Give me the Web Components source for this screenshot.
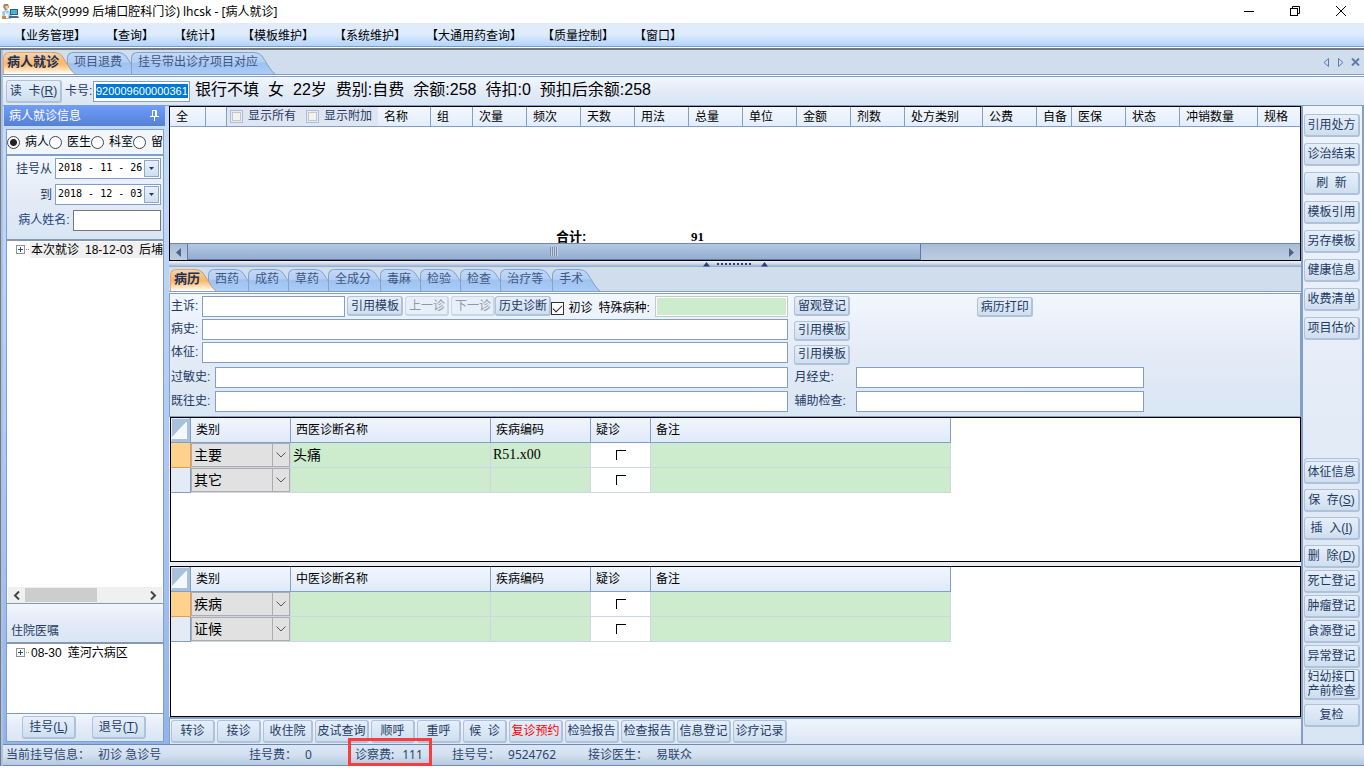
<!DOCTYPE html>
<html lang="zh-CN">
<head>
<meta charset="utf-8">
<title>易联众 - 病人就诊</title>
<style>
html,body{ height:100%; margin:0; }
body{
	--line:#839fc6;
	--ink:#1e3a63;
	--panel:linear-gradient(#f2f7fe,#e4ebf7 50%,#d9e6f4);
	--sans:"Liberation Sans","Noto Sans CJK SC",sans-serif;
	--ui:"Noto Sans","Noto Sans CJK SC",sans-serif;
	font:12px/16px var(--sans);
	color:#000;
	background:#fff;
	overflow:hidden;
}
</style>
</head>
<body>
<his-app></his-app>

<script>
//========================================================================
// outpatient desk
//	ui-*  ... small reusable parts (button, field, tab, tree node ...)
//	his-* ... the sections of the window
//========================================================================

const RESET = `
	*{ box-sizing:border-box; }
	:host{ display:block; box-sizing:border-box; }
	:host([hidden]){ display:none; }
	button,input,select{ font:inherit; color:inherit; margin:0; }
`;

//--base class : subclasses only supply css() and html()--
class Part extends HTMLElement{
	css(){ return "" }
	html(){ return "<slot></slot>" }
	attr(name,fallback=""){ return this.getAttribute(name) ?? fallback }
	connectedCallback(){
		if(this.shadowRoot) return;
		const tpl = document.createElement("template");
		tpl.innerHTML = `<style>${RESET}${this.css()}</style>${this.html()}`;
		this.attachShadow({mode:"open"}).appendChild(tpl.content.cloneNode(true));
	}
}

//--push button--
class UiButton extends Part{
	css(){ return `
		:host{ display:inline-flex; height:23px; min-width:44px; color:var(--ink); }
		button{
			flex:1; padding:0; white-space:pre; text-align:center;
			line-height:14px; cursor:default;
			border:2px solid #b0c1da; border-width:1px 2px 2px 1px; border-radius:3px;
			background:linear-gradient(#e6effa,#dbe7f5 50%,#cfdff0);
		}
		button:disabled{ color:#8f98a8; border-color:#c9d6e8; background:#e7eff9; }
		:host([alert]){ color:#f00; }
	` }
	html(){ return `<button type="button" ${this.hasAttribute("disabled")?"disabled":""}><slot></slot></button>` }
}
customElements.define("ui-button",UiButton);

//--label + text box--
class UiField extends Part{
	css(){ return `
		:host{ display:flex; align-items:center; height:21px; color:var(--ink); min-width:0; }
		label{ flex:0 0 var(--label,31px); padding-bottom:1px; white-space:nowrap; text-align:var(--label-align,left); }
		input{
			flex:1; min-width:0; height:100%; padding:0 2px; border-radius:0; outline:0;
			border:1px solid var(--field-line,var(--line)); background:#fff; color:#000;
		}
		:host([green]) label{ color:#000; padding:3px 0 0; }
		:host([green]) input{ border-color:#c8c8c8; background:#cdebcd; box-shadow:inset 0 0 0 1px #fff; }
		:host([picked]) input{ font:11px/15px "Liberation Sans",sans-serif; background:linear-gradient(#0078d7,#0078d7) center/calc(100% - 3px) 14px no-repeat #fff; color:#fff; }
	` }
	html(){ return `<label for="box">${this.attr("label")}</label><input id="box" type="text" value="${this.attr("value")}">` }
}
customElements.define("ui-field",UiField);

//--date box with a drop button--
class UiDate extends Part{
	css(){ return `
		:host{ display:flex; align-items:center; height:21px; color:var(--ink); }
		label{ flex:0 0 48px; padding-right:3px; text-align:right; white-space:nowrap; }
		.box{ flex:1; min-width:0; display:flex; height:100%; padding:1px; border:1px solid var(--line); background:#fff; }
		input{ flex:1; min-width:0; padding:0 0 2px 1px; border:0; outline:0; background:none; color:#000; font:10px/14px "DejaVu Sans Mono",monospace; }
		button{ flex:0 0 15px; padding:0; border:1px solid #8ea8cc; background:linear-gradient(#e8f0fa,#cfdff1); display:grid; place-items:center; }
	` }
	html(){ return `<label for="date">${this.attr("label")}</label>
		<div class="box"><input id="date" value="${this.attr("value")}">
		<button type="button" aria-label="▾"><svg width="5" height="3"><path d="M0 0H5L2.500 3Z" fill="#1e3a63"/></svg></button></div>` }
}
customElements.define("ui-date",UiDate);

//--check box with its caption--
class UiCheck extends Part{
	css(){ return `
		:host{ display:inline-flex; }
		label{ display:flex; align-items:center; gap:4px; white-space:nowrap; }
		input{ appearance:none; width:13px; height:13px; border:1px solid #333; background:#fff; display:grid; place-items:center; }
		input:checked::before{ content:""; width:8px; height:4px; border:solid #222; border-width:0 0 1px 1px; transform:translateY(-1px) rotate(-45deg); }
		:host([soft]) label{ gap:5px; color:var(--ink); }
		:host([soft]) input{ border-color:#a9bfe0; background:#f2f2f0; box-shadow:inset 0 0 0 1px #e4ebf7,inset 0 0 0 2px #c5c5c5; }
		:host([soft]) span{ padding-bottom:2px; }
	` }
	html(){ return `<label><input type="checkbox" ${this.hasAttribute("checked")?"checked":""}><span><slot></slot></span></label>` }
}
customElements.define("ui-check",UiCheck);

//--tab : rounded on the left, slanted on the right--
class UiTab extends Part{
	css(){ return `
		:host{ display:inline-block; height:22px; margin-right:-8px; position:relative; z-index:0; }
		:host([active]){ z-index:1; }
		button{ display:grid; height:22px; padding:0; border:0; background:none; color:#40577f; }
		.shape,.text{ grid-area:1/1; }
		.shape{ display:flex; min-width:0; }
		.shape i{
			flex:1; border:1px solid #86a2ca; border-width:1px 0 0 1px; border-radius:6px 0 0 0;
			background:linear-gradient(#c1d9fa,#b3cff5 45%,#9fc2f1 50%,#a9cbf6);
		}
		.text{ padding:1px 17px 0 7px; line-height:18px; white-space:nowrap; text-align:left; }
		:host([active]) button{ color:#1c3258; font-weight:bold; }
		:host([active]) .text{ padding:1px 16px 0 4px; font-size:13px; }
		:host([active]) .shape i{ border-color:#e0a878; background:linear-gradient(#f3d3ae,#fab970 45%,#ffb867 55%,#fff3e2 92%,#fff); }
		svg{ flex:0 0 23px; height:22px; }
	` }
	html(){
		const on = this.hasAttribute("active");
		const stops = on
			? [["0","#f3d3ae"],[".45","#fab970"],[".55","#ffb867"],[".92","#fff3e2"],["1","#fff"]]
			: [["0","#c1d9fa"],[".45","#b3cff5"],[".5","#9fc2f1"],["1","#a9cbf6"]];
		return `<button type="button" role="tab" aria-selected="${on}">
			<span class="shape"><i></i><svg viewBox="0 0 23 22"><defs><linearGradient id="g" x2="0" y2="1">
			${stops.map(s=>`<stop offset="${s[0]}" stop-color="${s[1]}"/>`).join("")}</linearGradient></defs>
			<path d="M0 0H2Q7 0 10 4L17 15Q20 20 23 22H0Z" fill="url(#g)"/>
			<path d="M0 .5H2Q7 .5 10 4L17 15Q20 20 23 22" fill="none" stroke="${on?"#c79b7c":"#86a2ca"}"/></svg></span>
			<span class="text"><slot></slot></span></button>`;
	}
}
customElements.define("ui-tab",UiTab);

//--strip that holds the tabs, double line under it--
class UiTabs extends Part{
	css(){ return `
		:host{ flex:none; display:flex; justify-content:space-between; height:27px; background:#d0dded;
			border-bottom:1px solid var(--line); box-shadow:inset 0 -1px #fff,inset 0 -2px var(--line); padding-bottom:2px; }
		.tabs{ display:flex; align-items:flex-end; }
	` }
	html(){ return `<div class="tabs" role="tablist"><slot></slot></div><slot name="tools"></slot>` }
}
customElements.define("ui-tabs",UiTabs);

//--one node of a tree--
class UiNode extends Part{
	css(){ return `
		:host{ display:flex; align-items:center; height:17px; padding-left:9px; white-space:nowrap; }
		svg{ flex:none; }
		.text{ display:flex; gap:6px; padding:0 1px; }
		:host([current]) .text{ background:#f0f0f0; }
	` }
	html(){ return `<svg width="14" height="11"><rect x=".5" y="1.500" width="8" height="8" fill="#fff" stroke="#919191"/>
		<path d="M2 5.500H7M4.500 3V8" stroke="#2b4f92"/><path d="M10 5.500h1M12 5.500h1" stroke="#888"/></svg>
		<span class="text"><slot></slot></span>` }
}
customElements.define("ui-node",UiNode);

//--title bar--
class HisTitle extends Part{
	css(){ return `
		:host{ flex:none; display:flex; align-items:center; height:23px; padding-left:2px; background:#fff; font-family:var(--ui); }
		h1{ flex:1; margin:0 0 0 3px; font-size:12px; font-weight:normal; line-height:22px; }
		button{ width:46px; height:22px; padding:0 0 2px; border:0; background:none; display:grid; place-items:center; }
		button path,button rect{ fill:none; stroke:#000; }
	` }
	html(){ return `
		<svg width="17" height="17" viewBox="0 0 17 17">
			<path d="M2 1h4l1 3-2 3H3L1 4Z" fill="#a9825f"/><path d="M3 3h3v3H4Z" fill="#f0cda8"/>
			<path d="M0 9 3 7l4 1 3 4-1 4H1Z" fill="#9cc5e8"/><path d="M3 8 5 11 7 9 6 15H3Z" fill="#e9f4fd"/>
			<rect x="8" y="6" width="8" height="6" fill="#2b5f86"/><rect x="9" y="7" width="6" height="4" fill="#48b3d4"/>
			<path d="M7 13h9l1 2H7Z" fill="#59677a"/><path d="M0 13h4v3H0Z" fill="#d6873f"/>
		</svg>
		<h1>易联众(9999 后埔口腔科门诊) lhcsk - [病人就诊]</h1>
		<button aria-label="最小化"><svg width="10" height="10"><path d="M0 5.500H10"/></svg></button>
		<button aria-label="还原"><svg width="10" height="10"><rect x=".5" y="2.500" width="7" height="7"/><path d="M2.500 2V.5H9.500V7.500H8"/></svg></button>
		<button aria-label="关闭"><svg width="10" height="10"><path d="M0 0 10 10M10 0 0 10"/></svg></button>` }
}
customElements.define("his-title",HisTitle);

//--menu bar--
class HisMenu extends Part{
	css(){ return `
		:host{ flex:none; height:24px; border-bottom:1px solid #6f9fd8; background:linear-gradient(#e3ebf8,#dcecfe 50%,#b3d3fb); font-family:var(--ui); }
		nav{ display:flex; gap:20px; padding:1px 0 0 14px; }
		button{ padding:0; border:0; background:none; line-height:24px; }
	` }
	html(){
		const items = ["业务管理","查询","统计","模板维护","系统维护","大通用药查询","质量控制","窗口"];
		return `<nav>${items.map(t=>`<button type="button">【${t}】</button>`).join("")}</nav>`;
	}
}
customElements.define("his-menu",HisMenu);

//--card reader line--
class HisPatient extends Part{
	css(){ return `
		:host{ flex:none; display:flex; align-items:center; height:29px; padding-left:3px; border-bottom:1px solid var(--line); background:var(--panel); }
		ui-button{ width:56px; margin-right:3px; }
		ui-field{ --label:28px; width:125px; margin-right:5px; }
		p{ display:flex; gap:9px; margin:0; font-size:16px; line-height:22px; white-space:nowrap; padding-bottom:2px; }
	` }
	html(){ return `<ui-button>读  卡(<u>R</u>)</ui-button><ui-field picked label="卡号:" value="920009600000361"></ui-field>
		<p><span>银行不填</span><span>女</span><span>22岁</span><span>费别:自费</span><span>余额:258</span><span>待扣:0</span><span>预扣后余额:258</span></p>` }
}
customElements.define("his-patient",HisPatient);

//--left panel--
class HisSide extends Part{
	css(){ return `
		:host{ flex:0 0 162px; min-width:0; display:flex; flex-direction:column; padding:0 1px 2px 0; }
		h2{ flex:none; display:flex; justify-content:space-between; align-items:center; height:20px; margin:0; padding:0 6px 1px 5px; font-size:12px; font-weight:normal;
			color:#fff; background:linear-gradient(#6f9cfb,#5480d4); }
		.body{ flex:1; min-height:0; display:flex; flex-direction:column; margin:3px 1px 0 2px; border:1px solid var(--line); background:var(--panel); overflow:hidden; }
		.radios{ flex:none; display:flex; align-items:center; height:26px; border-bottom:2px solid var(--line); overflow:hidden; }
		.radios label{ display:flex; align-items:center; white-space:nowrap; }
		.radios input{ appearance:none; flex:none; width:13px; height:13px; margin-right:5px; border:1px solid #444; border-radius:50%; background:#fff; }
		.radios input:checked{ background:radial-gradient(#222 3px,#fff 4px); }
		.filter{ flex:none; display:flex; flex-direction:column; gap:5px; height:83px; padding:2px 2px 0 0; background:var(--panel); }
		.filter ui-field{ --label:66px; --label-align:right; --field-line:#777; color:#1b4080; }
		.tree{ min-height:0; border:solid #8797b0; border-width:2px 0 1px; background:#fff; overflow:hidden; }
		.visits{ flex:1; display:flex; flex-direction:column; justify-content:space-between; }
		.bar{ display:flex; align-items:center; height:16px; margin:0 1px; background:#f0f0f0; }
		.bar svg{ flex:0 0 17px; }
		.bar .rail{ flex:1; height:14px; }
		.bar .thumb{ width:60%; height:14px; background:#cdcdcd; }
		h3{ flex:none; display:flex; align-items:flex-end; height:38px; margin:0; padding:0 0 3px 4px; font-size:12px; font-weight:normal; color:var(--ink); background:var(--panel); }
		.orders{ flex:0 0 72px; }
		.foot{ flex:none; display:flex; justify-content:space-between; height:27px; padding:2px 17px 0 15px; background:var(--panel); }
		.foot ui-button{ width:54px; }
	` }
	html(){
		const radios = ["病人","医生","科室","留"].map((t,i)=>`<label><input type="radio" name="by" ${i?"":"checked"}>${t}</label>`).join("");
		return `
		<h2>病人就诊信息<svg width="9" height="11"><path d="M2.500 6V.5H6.500V6M5.500 1V6M0 6.500H9M4.500 7V11" fill="none" stroke="#fff"/></svg></h2>
		<div class="body">
			<div class="radios">${radios}</div>
			<div class="filter">
				<ui-date label="挂号从" value="2018 - 11 - 26"></ui-date>
				<ui-date label="到" value="2018 - 12 - 03"></ui-date>
				<ui-field label="病人姓名:&nbsp;"></ui-field>
			</div>
			<div class="tree visits">
				<ui-node current><span>本次就诊</span><span>18-12-03</span><span>后埔</span></ui-node>
				<div class="bar">
					<svg height="9" viewBox="0 0 17 9"><path d="M11 .5 7 4.500 11 8.500" fill="none" stroke="#444" stroke-width="2"/></svg>
					<div class="rail"><div class="thumb"></div></div>
					<svg height="9" viewBox="0 0 17 9"><path d="M6 .5 10 4.500 6 8.500" fill="none" stroke="#444" stroke-width="2"/></svg>
				</div>
			</div>
			<h3>住院医嘱</h3>
			<div class="tree orders"><ui-node><span>08-30</span><span>莲河六病区</span></ui-node></div>
			<div class="foot"><ui-button>挂号(<u>L</u>)</ui-button><ui-button>退号(<u>T</u>)</ui-button></div>
		</div>`;
	}
}
customElements.define("his-side",HisSide);

//--prescription grid at the top--
class HisOrders extends Part{
	css(){ return `
		:host{ flex:0 0 155px; display:flex; flex-direction:column; border:1px solid #000; background:#fff; overflow:hidden; }
		.view{ flex:1; min-height:0; overflow:hidden; }
		table{ width:100%; table-layout:fixed; border-collapse:separate; border-spacing:0; }
		th{ height:20px; padding:1px 0 0 6px; text-align:left; font-weight:normal; white-space:nowrap;
			border:solid var(--line); border-width:0 1px 1px 0; background:linear-gradient(#f3f8ff,#e3edfb); }
		th.opts{ border-right:0; padding:0; background:#e0e6f1; }
		th:last-child{ border-right:0; }
		.opts div{ display:flex; gap:10px; padding-left:3px; height:18px; }
		tbody td{ height:102px; padding:0; }
		tfoot td{ padding:0; font-size:13px; font-weight:bold; line-height:16px; white-space:nowrap; }
		tfoot .sum{ padding-left:29px; }
		tfoot .num{ padding-left:2px; font-family:"Liberation Serif",serif; }
		.scroll{ flex:none; display:flex; align-items:center; height:17px; border-top:1px solid #6d87ad; background:linear-gradient(#a9bdd6,#bccde1); }
		.scroll svg{ flex:0 0 17px; }
		.rail{ flex:1; height:16px; }
		.thumb{ width:67%; height:16px; display:grid; place-items:center; border:solid #5f7ba3; border-width:0 1px 1px; background:linear-gradient(#b3c9e5,#93aed0); }
		.grip{ width:8px; height:9px; background:repeating-linear-gradient(90deg,#7f8fa6 0 1px,#c4d3e7 1px 2px); }
	` }
	html(){
		//last column takes the rest
		const cols = [["全",36],["",21],["*",151],["名称",53],["组",42],["次量",54],["频次",54],["天数",54],["用法",54],["总量",54],["单位",54],
			["金额",54],["剂数",54],["处方类别",78],["公费",54],["自备",35],["医保",54],["状态",54],["冲销数量",78],["规格",0]];
		const opts = `<th class="opts"><div><ui-check soft>显示所有</ui-check><ui-check soft>显示附加</ui-check></div></th>`;
		return `<div class="view"><table>
			<colgroup>${cols.map(c=>`<col${c[1]?` style="width:${c[1]}px"`:""}>`).join("")}</colgroup>
			<thead><tr>${cols.map(c=>c[0]==="*"?opts:`<th>${c[0]}</th>`).join("")}</tr></thead>
			<tbody><tr><td colspan="20"></td></tr></tbody>
			<tfoot><tr><td colspan="6"></td><td class="sum" colspan="3">合计:</td><td class="num">91</td><td colspan="10"></td></tr></tfoot>
		</table></div>
		<div class="scroll">
			<svg height="11" viewBox="0 0 17 11"><path d="M11 1V10L6 5.500Z" fill="#4a628c"/></svg>
			<div class="rail"><div class="thumb"><div class="grip"></div></div></div>
			<svg height="11" viewBox="0 0 17 11"><path d="M6 1V10L11 5.500Z" fill="#4a628c"/></svg>
		</div>`;
	}
}
customElements.define("his-orders",HisOrders);

//--splitter between the grid and the record--
class HisSplit extends Part{
	css(){ return `
		:host{ flex:0 0 6px; display:flex; justify-content:center; align-items:center; background:linear-gradient(#f2f5fb,#c9d6e8 50%,#8ea8cb); }
		svg{ display:block; }
	` }
	html(){ return `<svg width="66" height="5"><path d="M1 4.500 4.500 0 8 4.500ZM59 4.500 62.500 0 66 4.500Z" fill="#26407a"/><path d="M15 2H51" stroke="#26407a" stroke-width="2" stroke-dasharray="2 2"/></svg>` }
}
customElements.define("his-split",HisSplit);

//--medical record form--
class HisRecord extends Part{
	css(){ return `
		:host{
			flex:none; height:123px; padding:2px 0 0 1px; display:grid; align-items:start;
			grid-template-columns:618fr 6px 62px 288fr 156fr; grid-template-rows:23px 23px 25px 24px 21px;
			border:solid var(--line); border-width:0 1px 1px 1px; background:var(--panel);
		}
		ui-button{ height:20px; width:56px; }
		.first{ display:flex; min-width:0; }
		.first ui-field:first-child{ flex:1; margin-right:2px; }
		.first ui-button.step{ width:42px; margin-left:2px; }
		.first ui-check{ height:22px; padding-top:2px; color:#000; }
		.first ui-field[green]{ --label:57px; width:190px; margin-left:6px; }
		.long{ grid-column:1; --label:44px; }
		.mid{ grid-column:3; align-self:center; }
		.top{ align-self:start; }
		.side{ grid-column:3/5; --label:62px; }
		.print{ grid-column:4; margin:1px 0 0 42%; }
		.long.short{ --label:31px; }
	` }
	html(){ return `
		<div class="first">
			<ui-field label="主诉:"></ui-field>
			<ui-button>引用模板</ui-button><ui-button class="step" disabled>上一诊</ui-button><ui-button class="step" disabled>下一诊</ui-button>
			<ui-button>历史诊断</ui-button><ui-check checked>初诊</ui-check>
			<ui-field green label="特殊病种:"></ui-field>
		</div>
		<ui-button class="mid top">留观登记</ui-button><ui-button class="print">病历打印</ui-button>
		<ui-field class="long short" label="病史:"></ui-field><ui-button class="mid">引用模板</ui-button>
		<ui-field class="long short" label="体征:"></ui-field><ui-button class="mid">引用模板</ui-button>
		<ui-field class="long" label="过敏史:"></ui-field><ui-field class="side" label="月经史:"></ui-field>
		<ui-field class="long" label="既往史:"></ui-field><ui-field class="side" label="辅助检查:"></ui-field>` }
}
customElements.define("his-record",HisRecord);

//--diagnosis grid; rows="type,name,code;type,name,code"--
class HisDiagnosis extends Part{
	css(){ return `
		:host{ min-height:0; border:1px solid #000; background:#fff; overflow:hidden; }
		table{ width:780px; table-layout:fixed; border-collapse:separate; border-spacing:0; }
		th,td{ height:25px; padding:0 0 0 5px; text-align:left; font-weight:normal; white-space:nowrap; }
		th{ border:solid var(--line); border-width:0 1px 1px 0; background:linear-gradient(#f1f6fe,#dfeaf8); }
		td{ padding-left:2px; border:solid #ced6e6; border-width:0 1px 1px 0; background:#cdebcd; }
		td.head{ background:#e3ebf7; border-color:var(--line); }
		td.on{ background:#ffd28c; border-color:#f09a3e; }
		td.pick{ padding:0; background:#fff; }
		td.name{ font-size:14px; }
		td.code{ font-family:"Liberation Serif",serif; font-size:14px; }
		td.mark{ background:#fff; padding:0; }
		.mark input{ display:block; appearance:none; width:10px; height:10px; margin:0 auto; border:solid #000; border-width:1px 0 0 1px; }
		th.corner{ padding:0; background:#a9c0dd; }
		.corner svg{ display:block; }
		.combo{ display:grid; height:24px; border:1px solid #adadad; background:#e1e1e1; }
		.combo>*{ grid-area:1/1; }
		select{ appearance:none; width:100%; padding:0 0 0 2px; border:0; border-radius:0; outline:0; background:none; font-size:14px; line-height:20px; }
		.combo span{ justify-self:end; width:17px; border:solid #adadad; border-width:0 0 0 1px; display:grid; place-items:center; pointer-events:none; }
	` }
	html(){
		const rows = this.attr("rows").split(";").map(r=>r.split(","));
		const body = rows.map((r,i)=>`<tr><td class="head${i?"":" on"}"></td>
			<td class="pick"><div class="combo"><select aria-label="类别"><option>${r[0]}</option></select>
				<span><svg width="10" height="6"><path d="M.5 .5 5 5 9.500 .5" fill="none" stroke="#555"/></svg></span></div></td>
			<td class="name">${r[1]||""}</td><td class="code">${r[2]||""}</td>
			<td class="mark"><input type="checkbox" aria-label="疑诊"></td><td></td></tr>`).join("");
		return `<table>
			<colgroup><col style="width:20px"><col style="width:100px"><col style="width:200px"><col style="width:100px"><col style="width:60px"><col></colgroup>
			<thead><tr><th class="corner"><svg width="19" height="24"><path d="M1 21V19L15 4H16V21Z" fill="#f4f8fd"/><path d="M.5 23V.5H18" fill="none" stroke="#e2ebf6"/></svg></th>
			<th>类别</th><th>${this.attr("caption")}</th><th>疾病编码</th><th>疑诊</th><th>备注</th></tr></thead>
			<tbody>${body}</tbody></table>`;
	}
}
customElements.define("his-diagnosis",HisDiagnosis);

//--buttons under the grids--
class HisActions extends Part{
	css(){ return `
		:host{ flex:none; display:flex; gap:2px; height:27px; padding:1px 0 0 1px; border:solid var(--line); border-width:2px 0 0 1px; background:linear-gradient(#eff5fd,#dbe6f4); }
		.three{ width:50px; }
		.four{ width:54px; }
	` }
	html(){
		const items = ["转诊","接诊","收住院","皮试查询","顺呼","重呼","候 诊","复诊预约","检验报告","检查报告","信息登记","诊疗记录"];
		const cls = {3:"three",4:"four"};
		return items.map(t=>`<ui-button class="${t.includes(" ")?"":cls[t.length]||""}" ${t==="复诊预约"?"alert":""}>${t.replace(" ","  ")}</ui-button>`).join("");
	}
}
customElements.define("his-actions",HisActions);

//--right hand buttons--
class HisRail extends Part{
	css(){ return `
		:host{ flex:0 0 63px; display:flex; flex-direction:column; justify-content:space-between; padding:8px 2px 17px 1px;
			border:solid var(--line); border-width:0 2px; background:linear-gradient(#eff5fd,#e3ebf7 50%,#d8e5f3); }
		.set{ display:flex; flex-direction:column; gap:6px; }
		.set.loose{ gap:5px; }
		.set.tight{ gap:2px; padding-top:2px; }
		.stub{ height:3px; margin-bottom:-5px; border:1px solid #b0c1da; border-bottom:0; border-radius:3px 3px 0 0; }
		.tall{ height:31px; margin-top:-1px; }
		.last{ margin-top:2px; }
	` }
	html(){
		const btn = t=>`<ui-button>${t}</ui-button>`;
		return `<div class="set">${["引用处方","诊治结束","刷  新","模板引用","另存模板","健康信息","收费清单","项目估价"].map(btn).join("")}</div>
		<div><div class="set loose"><div class="stub"></div>${["体征信息","保  存(<u>S</u>)","插  入(<u>I</u>)","删  除(<u>D</u>)"].map(btn).join("")}</div>
		<div class="set tight">${["死亡登记","肿瘤登记","食源登记","异常登记"].map(btn).join("")}
			<ui-button class="tall">妇幼接口<br>产前检查</ui-button><ui-button class="last">复检</ui-button></div></div>`;
	}
}
customElements.define("his-rail",HisRail);

//--status bar--
class HisStatus extends Part{
	css(){ return `
		:host{ flex:none; height:22px; border:solid #7089b3; border-width:1px 0; background:linear-gradient(#dce7f5,#d3e0f0 50%,#b5c8df); color:#2a466f; font-family:var(--ui); }
		dl{ display:flex; margin:0; padding-left:3px; line-height:20px; white-space:nowrap; }
		div{ position:relative; display:flex; }
		.info{ width:243px; } .fee{ width:106px; } .exam{ width:97px; } .no{ width:136px; }
		dt{ flex:none; }
		dd{ margin:0 0 0 8px; }
		.frame{ position:absolute; left:-7px; top:-7px; width:84px; height:28px; border:3px solid #fa3c3c; pointer-events:none; }
	` }
	html(){ return `<dl>
		<div class="info"><dt>当前挂号信息：</dt><dd>初诊 急诊号</dd></div>
		<div class="fee"><dt>挂号费：</dt><dd>0</dd></div>
		<div class="exam"><dt>诊察费:</dt><dd>111</dd><i class="frame"></i></div>
		<div class="no"><dt>挂号号：</dt><dd>9524762</dd></div>
		<div class="doc"><dt>接诊医生：</dt><dd>易联众</dd></div></dl>` }
}
customElements.define("his-status",HisStatus);

//--whole window--
class HisApp extends Part{
	css(){ return `
		:host{ display:flex; flex-direction:column; height:100vh; padding-bottom:2px; }
		.frame{ flex:1; min-height:0; display:flex; flex-direction:column; margin-top:1px; padding-left:2px; border:solid #787878; border-width:2px 0 0 1px; background:#a9c2e8; }
		.main{ flex:1; min-height:0; display:flex; padding-left:1px; background:linear-gradient(#c6dbfb,#b0cbf5 50%,#92b4ea); }
		.center{ flex:1; min-width:0; display:flex; flex-direction:column; margin-left:3px; background:#e9edf3; }
		.center ui-tabs{ padding-left:1px; }
		.tools{ display:flex; align-items:center; gap:6px; padding-right:4px; }
		.tools button{ padding:0; border:0; background:none; display:grid; place-items:center; width:9px; }
		.tools path{ fill:none; stroke:#5c7db3; }
		.west{ flex:145; margin-left:1px; }
		.east{ flex:151; margin:4px 0 0 1px; }
	` }
	html(){ return `
		<his-title></his-title>
		<his-menu></his-menu>
		<div class="frame">
			<ui-tabs><ui-tab active>病人就诊</ui-tab><ui-tab>项目退费</ui-tab><ui-tab>挂号带出诊疗项目对应</ui-tab>
				<div class="tools" slot="tools">
					<button aria-label="上一页"><svg width="6" height="9"><path d="M5.500 .5V8.500L1 4.500Z"/></svg></button>
					<button aria-label="下一页"><svg width="6" height="9"><path d="M.5 .5V8.500L5 4.500Z"/></svg></button>
					<button aria-label="关闭"><svg width="9" height="8"><path d="M1 .5 8 7.500M8 .5 1 7.500" stroke-width="2"/></svg></button>
				</div>
			</ui-tabs>
			<his-patient></his-patient>
			<div class="main">
				<his-side></his-side>
				<div class="center">
					<his-orders></his-orders>
					<his-split></his-split>
					<ui-tabs><ui-tab active>病历</ui-tab>${["西药","成药","草药","全成分","毒麻","检验","检查","治疗等","手术"].map(t=>`<ui-tab>${t}</ui-tab>`).join("")}</ui-tabs>
					<his-record></his-record>
					<his-diagnosis class="west" caption="西医诊断名称" rows="主要,头痛,R51.x00;其它"></his-diagnosis>
					<his-diagnosis class="east" caption="中医诊断名称" rows="疾病;证候"></his-diagnosis>
					<his-actions></his-actions>
				</div>
				<his-rail></his-rail>
			</div>
			<his-status></his-status>
		</div>` }
}
customElements.define("his-app",HisApp);
</script>
</body>
</html>
